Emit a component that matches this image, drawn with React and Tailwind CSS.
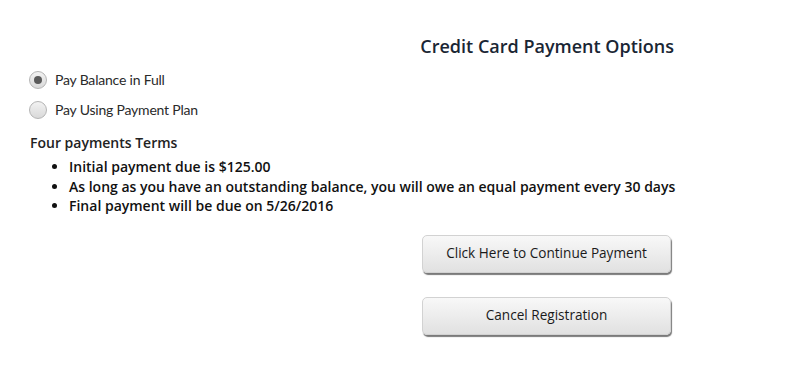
import React from "react";

function Radio({ checked, label }) {
  return (
    <label className="flex items-center h-[30px] cursor-pointer">
      <span className="w-[18px] h-[18px] rounded-full border border-[#b4b4b4] bg-gradient-to-b from-[#f2f2f2] to-[#d9d9d9] flex items-center justify-center">
        {checked && <span className="w-[8px] h-[8px] rounded-full bg-[#5a5a5a]" />}
      </span>
      <span className="ml-[8px] text-[14px] leading-[18px] text-[#2a2a2a] font-['Lato',sans-serif] font-normal tracking-[-0.2px] -mt-[1px]">
        {label}
      </span>
    </label>
  );
}

function Btn({ children }) {
  return (
    <button className="w-[249px] h-[38px] rounded-[5px] border border-[#d2d2d2] bg-gradient-to-b from-[#f8f8f8] to-[#e1e1e1] shadow-[1px_2px_1px_#7a7a7a] text-[13.6px] text-[#1a1a1a] font-['Open_Sans',sans-serif]">
      {children}
    </button>
  );
}

export default function App() {
  return (
    <div className="w-[806px] h-[387px] bg-white pl-[29px] pt-[34px] font-['Open_Sans',sans-serif]">
      <div className="w-[645px]">
        <h1 className="text-right text-[18px] leading-[24px] font-semibold text-[#1a2634]">
          Credit Card Payment Options
        </h1>
        <div className="mt-[7px]">
          <Radio checked label="Pay Balance in Full" />
          <Radio label="Pay Using Payment Plan" />
        </div>
        <div className="mt-[8px] text-[14px] leading-[20px] font-semibold text-[#222] pl-[1px]">
          Four payments Terms
        </div>
        <ul className="mt-[4px] list-disc pl-[40px] text-[14px] leading-[19.5px] font-semibold text-[#111] whitespace-nowrap">
          <li>Initial payment due is $125.00</li>
          <li>As long as you have an outstanding balance, you will owe an equal payment every 30 days</li>
          <li>Final payment will be due on 5/26/2016</li>
        </ul>
        <div className="mt-[19px] flex flex-col gap-[24px] pl-[393px]">
          <Btn>Click Here to Continue Payment</Btn>
          <Btn>Cancel Registration</Btn>
        </div>
      </div>
    </div>
  );
}
